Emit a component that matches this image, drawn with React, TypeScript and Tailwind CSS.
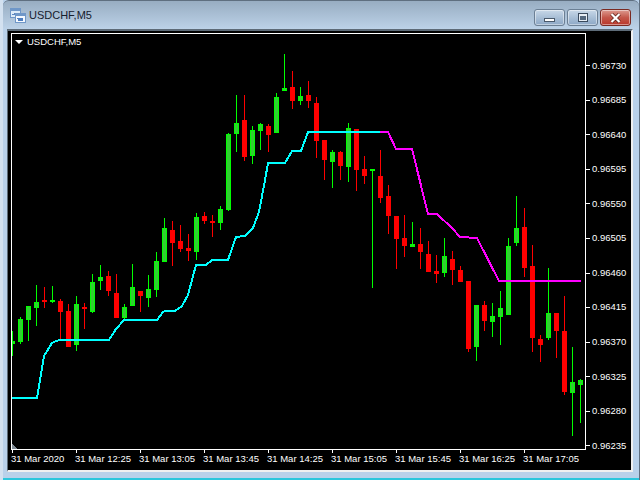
const FONT = "font-['Liberation_Sans',Arial,sans-serif]";

// [x index is implied] up?, high, body top, body bottom, low
const CANDLES: [number, number, number, number, number][] = [
  [1, 331, 341, 344, 356],
  [1, 317, 319, 342, 344],
  [1, 306, 306, 320, 341],
  [1, 285, 302, 308, 326],
  [0, 287, 300, 302, 308],
  [1, 286, 300, 302, 303],
  [0, 299, 301, 312, 339],
  [0, 304, 311, 347, 347],
  [1, 296, 304, 345, 351],
  [0, 303, 307, 309, 329],
  [1, 274, 282, 312, 313],
  [1, 265, 277, 281, 290],
  [0, 271, 276, 291, 296],
  [0, 274, 293, 318, 318],
  [1, 304, 307, 318, 320],
  [1, 264, 287, 306, 306],
  [0, 291, 291, 296, 312],
  [1, 275, 289, 298, 307],
  [1, 252, 261, 290, 297],
  [1, 218, 228, 262, 262],
  [0, 221, 230, 243, 266],
  [0, 225, 241, 249, 252],
  [0, 234, 248, 251, 261],
  [1, 213, 217, 252, 260],
  [0, 212, 216, 221, 224],
  [0, 215, 221, 223, 237],
  [1, 206, 209, 223, 230],
  [1, 133, 134, 210, 211],
  [1, 95, 123, 134, 152],
  [0, 95, 120, 157, 161],
  [1, 126, 130, 156, 164],
  [1, 123, 124, 131, 150],
  [0, 124, 126, 135, 152],
  [1, 93, 97, 133, 133],
  [1, 54, 88, 91, 91],
  [0, 71, 87, 101, 109],
  [1, 87, 96, 101, 105],
  [0, 81, 95, 101, 108],
  [0, 97, 103, 141, 158],
  [0, 140, 140, 160, 180],
  [1, 150, 152, 162, 188],
  [0, 151, 152, 166, 180],
  [1, 123, 128, 167, 182],
  [0, 129, 129, 170, 191],
  [0, 156, 169, 176, 184],
  [1, 169, 169, 171, 288],
  [0, 150, 176, 198, 203],
  [0, 185, 196, 216, 234],
  [0, 216, 216, 239, 269],
  [0, 215, 238, 246, 257],
  [1, 222, 244, 247, 247],
  [0, 228, 244, 252, 269],
  [0, 241, 254, 272, 272],
  [0, 255, 271, 274, 283],
  [1, 238, 256, 273, 277],
  [0, 251, 259, 270, 285],
  [0, 266, 270, 282, 282],
  [0, 281, 281, 349, 352],
  [1, 305, 305, 347, 361],
  [0, 301, 305, 321, 331],
  [1, 303, 316, 322, 337],
  [1, 291, 308, 317, 345],
  [1, 238, 246, 315, 315],
  [1, 196, 228, 243, 246],
  [0, 208, 227, 268, 277],
  [0, 245, 266, 338, 352],
  [0, 335, 339, 345, 362],
  [1, 268, 313, 338, 340],
  [0, 313, 313, 331, 358],
  [0, 296, 331, 392, 395],
  [1, 347, 382, 393, 436],
  [1, 379, 380, 385, 423],
];

const CYAN_LINE =
  "12,398 37,398 38,392 44,356 52,343 56,341 60,340 109,340 116,329 124,320 157,320 163,312 165,311 175,311 182,306 188,295 196,265 206,265 212,260 228,260 236,237 245,236 253,228 259,212 265,180 268,163 285,163 292,151 301,151 308,132 380,132";
const MAGENTA_LINE =
  "380,132 388,132 396,149 412,149 428,214 437,214 452,228 460,237 477,238 499,281 581,281";

const PRICES = [
  "0.96730", "0.96685", "0.96640", "0.96595", "0.96550", "0.96505",
  "0.96460", "0.96415", "0.96370", "0.96325", "0.96280", "0.96235",
];
const TIMES = [
  "31 Mar 2020", "31 Mar 12:25", "31 Mar 13:05", "31 Mar 13:45", "31 Mar 14:25",
  "31 Mar 15:05", "31 Mar 15:45", "31 Mar 16:25", "31 Mar 17:05",
];

const WindowIcon = () => (
  <svg width="16" height="15" viewBox="0 0 16 15" shapeRendering="crispEdges">
    <rect x="0.5" y="0.5" width="10" height="9" fill="#dcebf8" stroke="#6f97c8" />
    <rect x="1" y="1" width="9" height="2" fill="#6f97c8" />
    <path d="M2 6h2v-1h2v1h2" fill="none" stroke="#5b86c0" />
    <rect x="5.5" y="5.5" width="10" height="9" fill="#f4f9ff" stroke="#6f97c8" />
    <rect x="6" y="6" width="9" height="2" fill="#6f97c8" />
    <path d="M7 10h1v2h1v-2h1v2h1v-2h1v2h1" fill="none" stroke="#4f7fc0" />
  </svg>
);

const CaptionButton = ({ kind }: { kind: "min" | "max" | "close" }) => {
  const face =
    kind === "close"
      ? "border-[#7a2a22] bg-gradient-to-b from-[#dc9a90] via-[#c4574a] to-[#b8352a]"
      : "border-[#6b7f94] bg-gradient-to-b from-[#c8d8e8] via-[#a9bfd6] to-[#8da8c6]";
  return (
    <div className={`h-[17px] w-[31px] rounded-[3px] border flex items-center justify-center shadow-[inset_0_0_0_1px_rgba(255,255,255,0.45)] ${face}`}>
      {kind === "min" && (
        <div className="mt-[4px] h-[4px] w-[11px] border border-[#4a5a6c] bg-white" />
      )}
      {kind === "max" && (
        <div className="h-[9px] w-[10px] border border-[#3a4a5c] bg-[#e6edf4]">
          <div className="mx-auto mt-[1.5px] h-[4px] w-[6px] bg-[#54687e]" />
        </div>
      )}
      {kind === "close" && (
        <svg width="11" height="10" viewBox="0 0 11 10">
          <path d="M1.5 1 9.5 9M9.5 1 1.5 9" stroke="#5c2018" strokeWidth="3.6" />
          <path d="M1.5 1 9.5 9M9.5 1 1.5 9" stroke="#fff" strokeWidth="2.2" />
        </svg>
      )}
    </div>
  );
};

const Chart = () => (
  <svg
    width="573"
    height="415"
    viewBox="12 34 573 415"
    shapeRendering="crispEdges"
    className="block"
  >
    {CANDLES.map(([up, high, top, bottom, low], i) => {
      const x = 12 + 8 * i;
      return (
        <g key={i}>
          <rect x={x} y={high} width="1" height={low - high} fill={up ? "#00ff00" : "#ff0000"} />
          <rect x={x - 2} y={top} width="5" height={bottom - top} fill={up ? "#00ff00" : "#ff0000"} />
          {up === 1 && bottom - top > 2 && (
            <rect x={x - 1} y={top + 1} width="3" height={bottom - top - 2} fill="#32cd32" />
          )}
        </g>
      );
    })}
    <polyline points={CYAN_LINE} fill="none" stroke="#00ffff" strokeWidth="2" />
    <polyline points={MAGENTA_LINE} fill="none" stroke="#ff00ff" strokeWidth="2" />
    <polygon points="12,444 12,449 18,449" fill="#7f8a94" />
  </svg>
);

export default function App() {
  return (
    <div className={`flex h-[480px] w-[640px] flex-col overflow-hidden border-l-[3px] border-r border-l-[#d3e1f0] border-r-[#5f6f80] bg-[#b9d1ea] ${FONT}`}>
      <div className="flex h-[29px] shrink-0 items-center rounded-t-[6px] border-t border-[#5f6f80] bg-gradient-to-b from-[#98adc2] to-[#bcd2e8] pl-[7px] pr-[8px]">
        <WindowIcon />
        <span className="ml-[3px] mt-[1px] text-[11px] text-[#16202e]">USDCHF,M5</span>
        <div className="ml-auto flex gap-[2px] self-start pt-[8px]">
          <CaptionButton kind="min" />
          <CaptionButton kind="max" />
          <CaptionButton kind="close" />
        </div>
      </div>

      <div className="ml-[4px] mr-[6px] h-[443px] shrink-0 border-l border-t-2 border-b-2 border-r-2 border-t-[#5d6b78] border-l-[#5d6b78] border-b-[#f0f0f0] border-r-[#f0f0f0] bg-black pl-[3px] pt-[2px] text-white">
        <div className="flex">
          <div className="relative h-[417px] w-[575px] shrink-0 border border-white">
            <Chart />
            <div className="absolute left-[3px] top-[2px] flex items-center gap-[4px] text-[9.5px] leading-[12px]">
              <span className="h-0 w-0 border-x-[4px] border-t-[4px] border-x-transparent border-t-white" />
              <span>USDCHF,M5</span>
            </div>
          </div>
          <div className="flex h-[417px] flex-col pt-[15.5px]">
            {PRICES.map((p) => (
              <div key={p} className="flex h-[34.55px] shrink-0 items-center text-[9.5px]">
                <span className="h-px w-[4px] bg-white" />
                <span className="ml-[2px]">{p}</span>
              </div>
            ))}
          </div>
        </div>
        <div className="flex pl-[1px]">
          {TIMES.map((t) => (
            <div key={t} className="w-[64px] shrink-0">
              <div className="h-[3px] w-px bg-white" />
              <div className="-ml-[1px] whitespace-nowrap text-[9.5px] leading-[11px]">{t}</div>
            </div>
          ))}
        </div>
      </div>

      <div className="mt-auto h-[2px] shrink-0 bg-[#2cc6dc]" />
    </div>
  );
}
